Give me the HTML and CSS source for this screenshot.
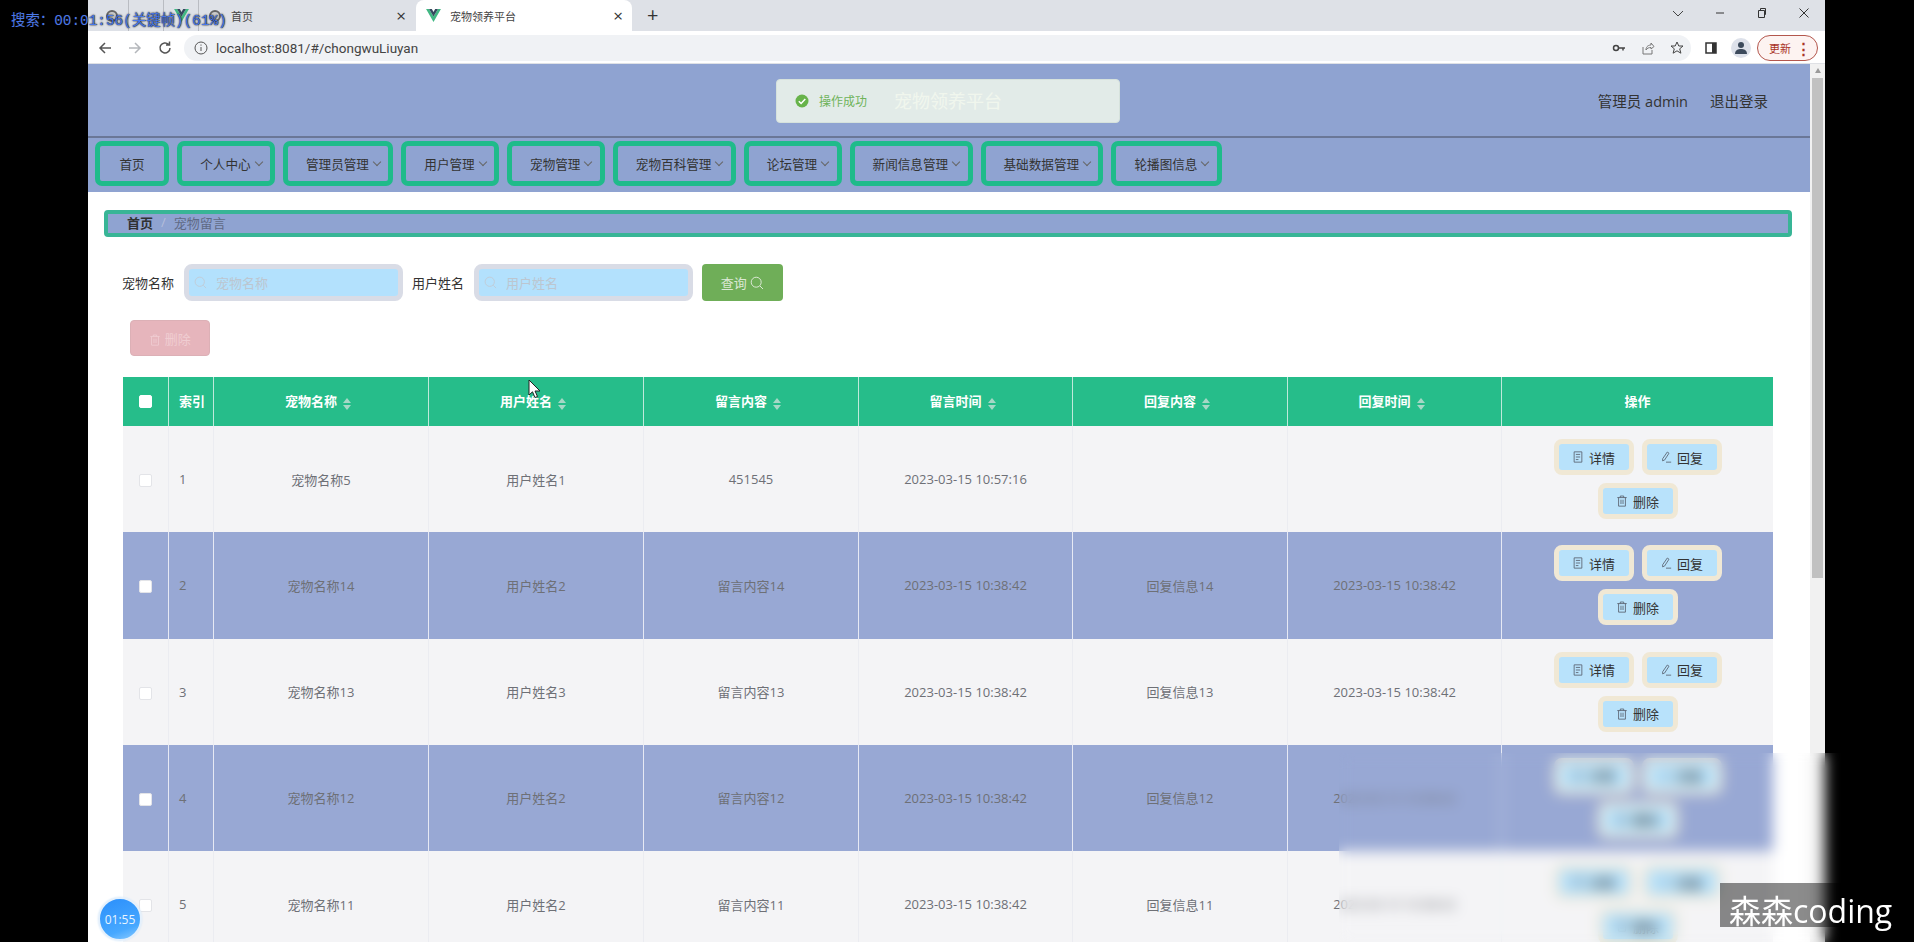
FILE: index.html
```html
<!DOCTYPE html>
<html lang="zh-CN">
<head>
    <meta charset="UTF-8">
    <meta name="viewport" content="width=device-width, initial-scale=1.0">
    <title>宠物领养平台</title>
    <link rel="stylesheet" href="styles.css">
</head>
<body>
    <svg class="sprites" width="0" height="0">
        <symbol id="i-search" viewBox="0 0 14 14"><circle cx="6.2" cy="6.2" r="5" fill="none" stroke="currentColor"/><path d="M10 10l3 3" stroke="currentColor" fill="none"/></symbol>
        <symbol id="i-doc" viewBox="0 0 14 14"><path d="M2.5 1h9v12h-9zM4.5 4h5M4.5 7h5M4.5 10h3" fill="none" stroke="currentColor"/></symbol>
        <symbol id="i-edit" viewBox="0 0 14 14"><path d="M8.5 1.2l2 1.4-5.2 8-2.3.9.1-2.5zM7 13h6" fill="none" stroke="currentColor"/></symbol>
        <symbol id="i-trash" viewBox="0 0 14 14"><path d="M1.5 3h11M5 3V1.2h4V3M3 3v10h8V3M5.8 5.5v5M8.2 5.5v5" fill="none" stroke="currentColor"/></symbol>
        <symbol id="i-vue" viewBox="0 0 16 14"><path d="M0 0h3.2L8 8.2 12.800 0H16L8 14z" fill="#41b883"/><path d="M3.200 0h3L8 3.200 9.800 0h3L8 8.200z" fill="#35495e"/></symbol>
    </svg>

    <div class="screen">
        <div class="bar-left"></div>

        <div class="window">
            <div class="tabstrip">
                <span class="tab-mini"><span class="tab-dot"></span></span>
                <span class="tab-mini tab-mini-narrow"></span>
                <span class="tab-mini tab-mini-narrow"><svg class="tab-logo"><use href="#i-vue"/></svg></span>
                <span class="tab tab-first">
                    <span class="tab-dot"></span>
                    <span class="tab-title">首页</span>
                    <span class="tab-close">×</span>
                </span>
                <span class="tab tab-active">
                    <svg class="tab-logo"><use href="#i-vue"/></svg>
                    <span class="tab-title">宠物领养平台</span>
                    <span class="tab-close">×</span>
                </span>
                <span class="tab-new">+</span>
                <span class="win-controls">
                    <svg width="12" height="12" viewBox="0 0 12 12"><path d="M1 4l5 5 5-5" fill="none" stroke="#444"/></svg>
                    <svg width="12" height="12" viewBox="0 0 12 12"><path d="M2 6h8" stroke="#333"/></svg>
                    <svg width="12" height="12" viewBox="0 0 12 12"><path d="M2.500 3.500h6v7h-6zM4.500 3.500V1.500h5v6h-1" fill="none" stroke="#333"/></svg>
                    <svg width="12" height="12" viewBox="0 0 12 12"><path d="M1.500 1.500l9 9M10.500 1.500l-9 9" stroke="#333"/></svg>
                </span>
            </div>

            <div class="toolbar">
                <svg class="nav-btn" width="16" height="16" viewBox="0 0 16 16"><path d="M14 8H3M8 3L3 8l5 5" fill="none" stroke="#555" stroke-width="1.500"/></svg>
                <svg class="nav-btn" width="16" height="16" viewBox="0 0 16 16"><path d="M2 8h11M8 3l5 5-5 5" fill="none" stroke="#b4b7bb" stroke-width="1.500"/></svg>
                <svg class="nav-btn" width="16" height="16" viewBox="0 0 16 16"><path d="M13 8a5 5 0 1 1-1.500-3.600M12.500 1.500v3.500H9" fill="none" stroke="#555" stroke-width="1.500"/></svg>
                <div class="omnibox">
                    <svg width="14" height="14" viewBox="0 0 14 14"><circle cx="7" cy="7" r="6" fill="none" stroke="#555"/><path d="M7 6v4M7 3.500v1.200" stroke="#555"/></svg>
                    <span class="url">localhost:8081/#/chongwuLiuyan</span>
                    <span class="omni-icons">
                        <svg width="14" height="14" viewBox="0 0 14 14"><circle cx="4" cy="7" r="2.500" fill="none" stroke="#444" stroke-width="1.500"/><path d="M6.500 7H13M11 7v2.500" stroke="#444" stroke-width="1.500" fill="none"/></svg>
                        <svg width="14" height="14" viewBox="0 0 14 14"><path d="M2 6v7h9V9M5 9c0-4 3-5 5-5V2l3 3.500L10 8V6.500C8 6.500 6 7 5 9z" fill="none" stroke="#777"/></svg>
                        <svg width="14" height="14" viewBox="0 0 14 14"><path d="M7 1l1.800 4h4.200l-3.300 2.800 1.200 4.400L7 9.800l-3.900 2.400 1.200-4.400L1 5h4.200z" fill="none" stroke="#444"/></svg>
                    </span>
                </div>
                <svg class="tool-panel" width="14" height="14" viewBox="0 0 14 14"><path d="M2 2h10v10H2z" fill="none" stroke="#333" stroke-width="1.500"/><path d="M8 2h4v10H8z" fill="#333"/></svg>
                <span class="avatar"><svg width="12" height="14" viewBox="0 0 12 14"><circle cx="6" cy="4" r="3" fill="#3c4a5c"/><path d="M0 13c0-4 3-5 6-5s6 1 6 5z" fill="#3c4a5c"/></svg></span>
                <span class="update-pill">更新<i class="pill-dots">⋮</i></span>
            </div>

            <div class="viewport">
                <div class="page">
                    <header class="site-header">
                        <div class="brand">宠物领养平台</div>
                        <div class="user-info">
                            <span>管理员 admin</span>
                            <span>退出登录</span>
                        </div>
                    </header>

                    <nav class="menu">
                        <a class="menu-item menu-plain">首页</a>
                        <a class="menu-item">个人中心<i class="chev"></i></a>
                        <a class="menu-item">管理员管理<i class="chev"></i></a>
                        <a class="menu-item">用户管理<i class="chev"></i></a>
                        <a class="menu-item">宠物管理<i class="chev"></i></a>
                        <a class="menu-item">宠物百科管理<i class="chev"></i></a>
                        <a class="menu-item">论坛管理<i class="chev"></i></a>
                        <a class="menu-item">新闻信息管理<i class="chev"></i></a>
                        <a class="menu-item">基础数据管理<i class="chev"></i></a>
                        <a class="menu-item">轮播图信息<i class="chev"></i></a>
                    </nav>

                    <div class="breadcrumb">
                        <b>首页</b><span class="crumb-sep">/</span><span class="crumb-last">宠物留言</span>
                    </div>

                    <form class="search-row">
                        <label>宠物名称</label>
                        <div class="search-input">
                            <svg class="search-icon"><use href="#i-search"/></svg>
                            <input type="text" placeholder="宠物名称">
                        </div>
                        <label>用户姓名</label>
                        <div class="search-input">
                            <svg class="search-icon"><use href="#i-search"/></svg>
                            <input type="text" placeholder="用户姓名">
                        </div>
                        <button type="button" class="btn-query">查询 <svg class="btn-icon btn-icon-big"><use href="#i-search"/></svg></button>
                    </form>

                    <button type="button" class="btn-remove"><svg class="btn-icon"><use href="#i-trash"/></svg> 删除</button>

                    <table class="data-table">
                        <colgroup>
                            <col class="c-check"><col class="c-check"><col class="c-wide"><col class="c-wide"><col class="c-wide"><col class="c-mid"><col class="c-wide"><col class="c-mid"><col class="c-ops">
                        </colgroup>
                        <thead>
                            <tr>
                                <th><span class="check"></span></th>
                                <th class="left">索引</th>
                                <th>宠物名称<i class="sort"></i></th>
                                <th>用户姓名<i class="sort"></i></th>
                                <th>留言内容<i class="sort"></i></th>
                                <th>留言时间<i class="sort"></i></th>
                                <th>回复内容<i class="sort"></i></th>
                                <th>回复时间<i class="sort"></i></th>
                                <th>操作</th>
                            </tr>
                        </thead>
                        <tbody>
                            <tr>
                                <td><span class="check"></span></td>
                                <td class="left">1</td>
                                <td>宠物名称5</td>
                                <td>用户姓名1</td>
                                <td>451545</td>
                                <td>2023-03-15 10:57:16</td>
                                <td></td>
                                <td></td>
                                <td><div class="ops">
                                    <button type="button"><svg class="btn-icon"><use href="#i-doc"/></svg>详情</button>
                                    <button type="button"><svg class="btn-icon"><use href="#i-edit"/></svg>回复</button>
                                    <button type="button"><svg class="btn-icon"><use href="#i-trash"/></svg>删除</button>
                                </div></td>
                            </tr>
                            <tr>
                                <td><span class="check"></span></td>
                                <td class="left">2</td>
                                <td>宠物名称14</td>
                                <td>用户姓名2</td>
                                <td>留言内容14</td>
                                <td>2023-03-15 10:38:42</td>
                                <td>回复信息14</td>
                                <td>2023-03-15 10:38:42</td>
                                <td><div class="ops">
                                    <button type="button"><svg class="btn-icon"><use href="#i-doc"/></svg>详情</button>
                                    <button type="button"><svg class="btn-icon"><use href="#i-edit"/></svg>回复</button>
                                    <button type="button"><svg class="btn-icon"><use href="#i-trash"/></svg>删除</button>
                                </div></td>
                            </tr>
                            <tr>
                                <td><span class="check"></span></td>
                                <td class="left">3</td>
                                <td>宠物名称13</td>
                                <td>用户姓名3</td>
                                <td>留言内容13</td>
                                <td>2023-03-15 10:38:42</td>
                                <td>回复信息13</td>
                                <td>2023-03-15 10:38:42</td>
                                <td><div class="ops">
                                    <button type="button"><svg class="btn-icon"><use href="#i-doc"/></svg>详情</button>
                                    <button type="button"><svg class="btn-icon"><use href="#i-edit"/></svg>回复</button>
                                    <button type="button"><svg class="btn-icon"><use href="#i-trash"/></svg>删除</button>
                                </div></td>
                            </tr>
                            <tr>
                                <td><span class="check"></span></td>
                                <td class="left">4</td>
                                <td>宠物名称12</td>
                                <td>用户姓名2</td>
                                <td>留言内容12</td>
                                <td>2023-03-15 10:38:42</td>
                                <td>回复信息12</td>
                                <td>2023-03-15 10:38:42</td>
                                <td><div class="ops">
                                    <button type="button"><svg class="btn-icon"><use href="#i-doc"/></svg>详情</button>
                                    <button type="button"><svg class="btn-icon"><use href="#i-edit"/></svg>回复</button>
                                    <button type="button"><svg class="btn-icon"><use href="#i-trash"/></svg>删除</button>
                                </div></td>
                            </tr>
                            <tr>
                                <td><span class="check"></span></td>
                                <td class="left">5</td>
                                <td>宠物名称11</td>
                                <td>用户姓名2</td>
                                <td>留言内容11</td>
                                <td>2023-03-15 10:38:42</td>
                                <td>回复信息11</td>
                                <td>2023-03-15 10:38:42</td>
                                <td><div class="ops">
                                    <button type="button"><svg class="btn-icon"><use href="#i-doc"/></svg>详情</button>
                                    <button type="button"><svg class="btn-icon"><use href="#i-edit"/></svg>回复</button>
                                    <button type="button"><svg class="btn-icon"><use href="#i-trash"/></svg>删除</button>
                                </div></td>
                            </tr>
                        </tbody>
                    </table>
                </div>

                <div class="scrollbar">
                    <i class="scroll-up"></i>
                    <i class="scroll-thumb"></i>
                </div>
            </div>
        </div>

        <div class="bar-right"></div>
    </div>

    <!-- things lying over the recording -->
    <div class="toast">
        <svg width="14" height="14" viewBox="0 0 14 14"><circle cx="7" cy="7" r="6.500" fill="#67b34a"/><path d="M3.800 7.200l2.300 2.300 4.200-4.500" fill="none" stroke="#fff" stroke-width="1.500"/></svg>
        <span>操作成功</span>
    </div>
    <svg class="cursor" width="14" height="20" viewBox="0 0 14 20"><path d="M1 1v15l3.500-3.200 2.500 5.700 2.500-1-2.500-5.500h5z" fill="#fff" stroke="#222"/></svg>
    <div class="blur-panel"></div>
    <div class="search-tag">搜索：00:01:56(关键帧)(61%)</div>
    <div class="timer">01:55</div>
    <div class="watermark">森森coding</div>
</body>
</html>
```

FILE: styles.css
```css
* {
    box-sizing: border-box;
}
html,
body {
    margin: 0;
    height: 942px;
    overflow: hidden;
}
body {
    font-family: "Open Sans", "Noto Sans CJK SC", sans-serif;
    font-size: 13px;
    color: #333;
    background: #000;
}
.sprites {
    position: absolute;
}
.screen {
    display: flex;
    height: 942px;
}
.bar-left {
    width: 88px;
    background: #000;
}
.bar-right {
    width: 89px;
    background: #000;
}
.window {
    width: 1737px;
    display: flex;
    flex-direction: column;
    background: #fff;
}

/* browser chrome */
.tabstrip {
    height: 31px;
    display: flex;
    align-items: flex-end;
    background: #dee1e7;
    font-size: 11px;
}
.tab-mini {
    width: 41px;
    height: 31px;
    display: flex;
    align-items: center;
    justify-content: center;
    padding-left: 8px;
    border-right: 1px solid #b9bcc2;
}
.tab-mini-narrow {
    width: 35px;
    padding-left: 0;
}
.tab-dot {
    width: 12px;
    height: 12px;
    flex: none;
    border-radius: 50%;
    border: 2px solid #666;
    background: #ccc;
}
.tab-logo {
    width: 15px;
    height: 13px;
    flex: none;
}
.tab {
    height: 31px;
    display: flex;
    align-items: center;
    color: #444;
}
.tab-first {
    width: 217px;
    gap: 10px;
    padding: 0 10px 0 10px;
}
.tab-active {
    width: 216px;
    gap: 9px;
    padding: 0 9px 0 10px;
    background: #fff;
    border-radius: 8px 8px 0 0;
}
.tab-title {
    flex: 1;
    margin-top: 1px;
}
.tab-close {
    font-size: 17px;
    color: #333;
}
.tab-new {
    margin-left: 15px;
    height: 31px;
    line-height: 30px;
    font-size: 20px;
    color: #333;
}
.win-controls {
    margin-left: auto;
    height: 31px;
    display: flex;
    align-items: flex-start;
    gap: 30px;
    padding: 7px 15px 0 0;
}
.toolbar {
    height: 33px;
    display: flex;
    align-items: center;
    padding: 1px 7px 0 9px;
    background: #fff;
    border-bottom: 1px solid #dfe1e5;
}
.nav-btn {
    margin-right: 14px;
    flex: none;
}
.omnibox {
    width: 1511px;
    height: 26px;
    margin-left: -3px;
    display: flex;
    align-items: center;
    gap: 8px;
    padding: 0 7px 0 10px;
    background: #f0f2f5;
    border-radius: 13px;
}
.url {
    font-family: Roboto, "Open Sans", sans-serif;
    font-size: 13.500px;
    color: #444;
}
.omni-icons {
    margin-left: auto;
    display: flex;
    gap: 15px;
}
.tool-panel {
    margin-left: 13px;
    flex: none;
}
.avatar {
    width: 20px;
    height: 20px;
    margin-left: 13px;
    flex: none;
    display: flex;
    align-items: center;
    justify-content: center;
    border-radius: 50%;
    background: #dde1ea;
}
.update-pill {
    width: 61px;
    height: 26px;
    margin-left: 6px;
    flex: none;
    display: flex;
    align-items: center;
    justify-content: space-between;
    padding: 0 6px 0 11px;
    border: 1px solid #b3564c;
    border-radius: 13px;
    background: #fdf3f1;
    color: #a93226;
    font-size: 11px;
}
.pill-dots {
    font-style: normal;
    font-size: 15px;
    font-weight: bold;
}

/* page */
.viewport {
    flex: 1;
    display: flex;
    min-height: 0;
}
.page {
    width: 1722px;
    overflow: hidden;
    background: #fff;
}
.scrollbar {
    width: 15px;
    background: #f1f1f1;
    padding: 4px 2px 0;
}
.scroll-up {
    display: block;
    width: 0;
    height: 0;
    margin: 0 auto 5px;
    border: 3px solid transparent;
    border-top: 0;
    border-bottom: 5px solid #9a9a9a;
}
.scroll-thumb {
    display: block;
    height: 500px;
    background: #c1c1c1;
}
.site-header {
    height: 74px;
    display: flex;
    align-items: center;
    padding-left: 806px;
    padding-right: 42px;
    background: #8fa3d1;
    border-bottom: 2px solid #6a7797;
}
.brand {
    font-size: 18px;
    color: #fff;
}
.user-info {
    margin-left: auto;
    display: flex;
    gap: 22px;
    font-size: 14.500px;
    color: #333;
}
.menu {
    height: 54px;
    display: flex;
    gap: 8px;
    padding: 3px 0 0 7px;
    background: #8fa3d1;
    font-size: 12.600px;
}
.menu-item {
    height: 45px;
    display: flex;
    align-items: center;
    padding: 0 7px 0 18px;
    border: 5px solid #1fbb8a;
    border-radius: 7px;
    color: #333;
    white-space: nowrap;
}
.menu-plain {
    padding: 0 19.500px;
}
.chev {
    width: 6px;
    height: 6px;
    margin: -3px 1.400px 0 5px;
    border-right: 1px solid #666;
    border-bottom: 1px solid #666;
    transform: rotate(45deg);
}
.breadcrumb {
    height: 27px;
    margin: 18px 18px 0 16px;
    display: flex;
    align-items: center;
    padding: 0 0 3px 19px;
    background: #8fa3d1;
    border: 4px solid #38b596;
    border-radius: 4px;
    color: #303133;
}
.breadcrumb b {
    font-weight: 700;
}
.crumb-sep {
    margin: 0 8px;
    color: #b4bedb;
}
.crumb-last {
    color: #5f6a85;
}
.search-row {
    margin: 27px 0 0 34px;
    display: flex;
    align-items: center;
}
.search-row label {
    width: 52px;
    margin-right: 10px;
    white-space: nowrap;
}
.search-input {
    position: relative;
    width: 219px;
    height: 37px;
    margin-right: 9px;
}
.search-input input {
    width: 100%;
    height: 100%;
    padding: 0 0 0 27px;
    background: #b3e1fd;
    border: 5px solid #d9dce6;
    border-radius: 8px;
    outline: none;
    font: inherit;
}
.search-input input::placeholder {
    color: #bcc6d0;
}
.search-icon {
    position: absolute;
    left: 10px;
    top: 12px;
    width: 13px;
    height: 13px;
    color: #c0cbd6;
}
.btn-icon {
    width: 12px;
    height: 12px;
    vertical-align: -2px;
}
.btn-icon-big {
    width: 14px;
    height: 14px;
}
.btn-query {
    width: 81px;
    height: 37px;
    background: #6fae58;
    border: 0;
    border-radius: 4px;
    color: #dbe8d4;
    font: inherit;
}
.btn-remove {
    display: block;
    width: 80px;
    height: 36px;
    margin: 19px 0 0 42px;
    background: #e6b5bc;
    border: 1px solid #dcb0b6;
    border-radius: 4px;
    color: #f0cdd2;
    font: inherit;
}
.data-table {
    width: 1650px;
    margin: 21px 0 0 35px;
    table-layout: fixed;
    border-collapse: separate;
    border-spacing: 0;
    text-align: center;
    color: #6e7076;
}
.c-check {
    width: 45px;
}
.c-wide {
    width: 215px;
}
.c-mid {
    width: 214px;
}
.c-ops {
    width: 272px;
}
.data-table th {
    height: 49px;
    padding: 0 0 3px;
    background: #26bd8a;
    color: #fff;
    font-weight: 700;
    border-left: 1px solid #bfe9db;
}
.data-table th:first-child,
.data-table td:first-child {
    border-left: 0;
}
.data-table td {
    height: 106.250px;
    padding: 0;
    background: #f4f4f6;
    border-left: 1px solid #ebecf1;
}
.data-table tbody tr:nth-child(even) td {
    background: #98a8d4;
    border-left-color: #e6e9f4;
}
.data-table .left {
    text-align: left;
    padding-left: 10px;
}
.check {
    display: inline-block;
    width: 13px;
    height: 13px;
    background: #fff;
    border: 1px solid #e3e4e8;
    border-radius: 2px;
    vertical-align: middle;
}
th .check {
    border-color: #fff;
}
.sort {
    display: inline-flex;
    flex-direction: column;
    gap: 2px;
    margin: 0 6px;
    vertical-align: 3px;
}
.sort::before,
.sort::after {
    content: "";
    border: 4px solid transparent;
}
.sort::before {
    border-top: 0;
    border-bottom: 5px solid #a6d8c6;
}
.sort::after {
    border-bottom: 0;
    border-top: 5px solid #a6d8c6;
}
.ops {
    width: 180px;
    margin: 0 auto;
    display: flex;
    flex-wrap: wrap;
    justify-content: center;
    gap: 8px;
}
.ops button {
    width: 80px;
    height: 36px;
    display: flex;
    align-items: center;
    justify-content: center;
    gap: 5px;
    padding: 0;
    background: #b8e2fb;
    border: 5px solid #f0e8d5;
    border-radius: 8px;
    color: #333;
    font: inherit;
}
.ops .btn-icon {
    color: #5a6472;
}

/* overlays */
.toast {
    position: absolute;
    left: 776px;
    top: 79px;
    width: 344px;
    height: 44px;
    display: flex;
    align-items: center;
    gap: 10px;
    padding-left: 18px;
    background: rgba(238, 245, 235, 0.88);
    border: 1px solid #d6e2dc;
    border-radius: 4px;
    color: #6fb35a;
    font-size: 12px;
}
.cursor {
    position: absolute;
    left: 528px;
    top: 379px;
}
.blur-panel {
    position: absolute;
    left: 1339px;
    top: 753px;
    width: 506px;
    height: 189px;
    backdrop-filter: blur(7px);
}
.search-tag {
    position: absolute;
    left: 11px;
    top: 12px;
    font-family: "Liberation Mono", "Noto Sans CJK SC", monospace;
    font-size: 14.400px;
    line-height: 18px;
    color: #4a78e8;
    text-shadow: 0 0 1px #111, 0 0 2px #111;
    white-space: nowrap;
}
.timer {
    position: absolute;
    left: 98px;
    top: 897px;
    width: 44px;
    height: 44px;
    border-radius: 50%;
    border: 2px solid #e4f0fc;
    background: linear-gradient(160deg, #2b8ffb, #47a8ff 72%, #8ccbff);
    box-shadow: 0 0 2px #cfe4f8;
    color: #e8f4ff;
    font-size: 12px;
    line-height: 42px;
    text-align: center;
}
.watermark {
    position: absolute;
    left: 1720px;
    top: 883px;
    width: 180px;
    height: 44px;
    padding-left: 9px;
    background: rgba(0, 0, 0, 0.45);
    color: #fff;
    font-family: "Open Sans", "Noto Sans CJK SC", sans-serif;
    font-size: 32px;
    line-height: 56px;
    white-space: nowrap;
}
```
